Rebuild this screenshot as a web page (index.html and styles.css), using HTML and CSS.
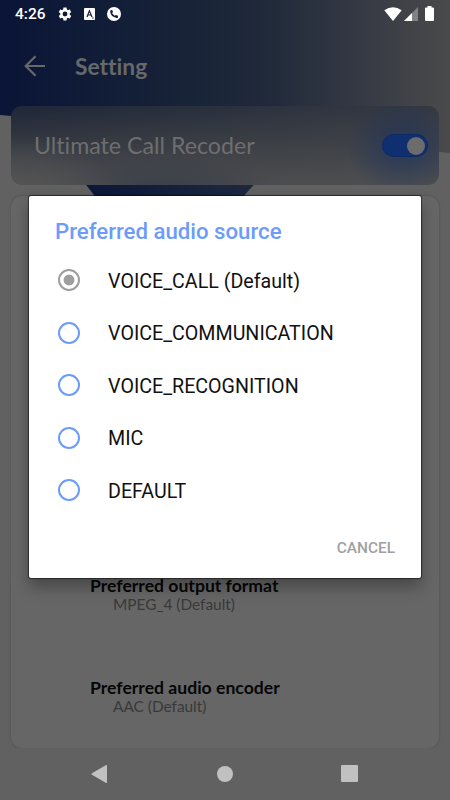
FILE: index.html
```html
<!DOCTYPE html>
<html lang="en">
<head>
    <meta charset="UTF-8">
    <meta name="viewport" content="width=device-width, initial-scale=1.0">
    <title>Setting</title>
    <link rel="stylesheet" href="styles.css">
</head>
<body>
    <div class="phone">
        <!-- Header shape -->
        <svg class="backdrop" width="450" height="200" viewBox="0 0 450 200">
            <defs>
                <linearGradient id="sky" x1="0" y1="0" x2="1" y2="0">
                    <stop offset="0" stop-color="#0a1537"/>
                    <stop offset="0.28" stop-color="#131e37"/>
                    <stop offset="0.6" stop-color="#202a3a"/>
                    <stop offset="0.8" stop-color="#353944"/>
                    <stop offset="1" stop-color="#4a4a4b"/>
                </linearGradient>
                <linearGradient id="tip" x1="0" y1="0" x2="1" y2="0">
                    <stop offset="0" stop-color="#0b1639"/>
                    <stop offset="1" stop-color="#1f2a40"/>
                </linearGradient>
            </defs>
            <path fill="url(#sky)" d="M0 0H450V153L439 152Q330 146 275 165H75Q55 122 11 116L0 115Z"/>
            <path fill="url(#tip)" d="M79 176H262L240 200H98Z"/>
        </svg>

        <div class="screen">
            <div class="status-bar">
                <span class="clock">4:26</span>
                <svg class="gear" width="16" height="16" viewBox="0 0 24 24"><path fill="#fff" d="M19.14 12.94c.04-.3.06-.61.06-.94s-.02-.64-.07-.94l2.03-1.58c.18-.14.23-.41.12-.61l-1.92-3.32c-.12-.22-.37-.29-.59-.22l-2.39.96c-.5-.38-1.03-.7-1.62-.94l-.36-2.54c-.04-.24-.24-.41-.48-.41h-3.84c-.24 0-.43.17-.47.41l-.36 2.54c-.59.24-1.13.57-1.62.94l-2.39-.96c-.22-.08-.47 0-.59.22L2.74 8.87c-.12.21-.08.47.12.61l2.03 1.58c-.05.3-.09.63-.09.94s.02.64.07.94l-2.03 1.58c-.18.14-.23.41-.12.61l1.92 3.32c.12.22.37.29.59.22l2.39-.96c.5.38 1.03.7 1.62.94l.36 2.54c.05.24.24.41.48.41h3.84c.24 0 .44-.17.47-.41l.36-2.54c.59-.24 1.13-.56 1.62-.94l2.39.96c.22.08.47 0 .59-.22l1.92-3.32c.12-.22.07-.47-.12-.61zM12 15.6a3.6 3.6 0 1 1 0-7.2 3.6 3.6 0 0 1 0 7.2z"/></svg>
                <svg class="keyboard" width="11" height="12" viewBox="0 0 11 12"><rect width="11" height="12" rx="1" fill="#fff"/><path d="M3 9L5.4 2.8 8 9M4 7H7" fill="none" stroke="#17213a" stroke-width="1.2"/><path d="M8 10h2" stroke="#17213a" stroke-width=".8"/></svg>
                <svg class="call" width="14" height="14" viewBox="0 0 14 14"><circle cx="7" cy="7" r="7" fill="#fff"/><path fill="#17213a" d="M3.7 3.2L5.2 3 6 5.1 5.1 6.1Q6 7.9 7.9 8.8L8.9 7.9 11 8.7V10.4Q10.4 11 9.6 10.9Q3.5 10 3.1 4.1Z"/></svg>
                <span class="status-icons">
                    <svg width="18" height="14" viewBox="0 0 18 14"><path fill="#fff" d="M.3 3.3Q9-2.9 17.7 3.3L9 14Z"/></svg>
                    <svg width="14" height="14" viewBox="0 0 14 14"><path fill="#808286" d="M14 0V14H0Z"/><path fill="#fff" d="M8 6V14H0Z"/></svg>
                    <svg class="battery" width="9" height="15" viewBox="0 0 9 15"><path fill="#fff" d="M2.5 0h4v1.5H8q1 0 1 1V14q0 1-1 1H1q-1 0-1-1V2.500q0-1 1-1h1.500Z"/></svg>
                </span>
            </div>

            <div class="toolbar">
                <svg width="22" height="22" viewBox="0 0 22 22"><path d="M21 11H2M11.500 1.200L1.700 11l9.800 9.800" fill="none" stroke="#676869" stroke-width="2.200"/></svg>
                <h1>Setting</h1>
            </div>

            <div class="banner">
                <span>Ultimate Call Recoder</span>
                <div class="switch"><div class="knob"></div></div>
            </div>

            <div class="card">
                <div class="item">
                    <h2>Preferred output format</h2>
                    <p>MPEG_4 (Default)</p>
                </div>
                <div class="item">
                    <h2>Preferred audio encoder</h2>
                    <p>AAC (Default)</p>
                </div>
            </div>

            <div class="nav-bar">
                <svg width="18" height="20" viewBox="0 0 18 20"><path fill="#c1c1c1" d="M14.700 1.200Q16 .6 16 2V18Q16 19.400 14.700 18.800L1 10.800Q-.2 10 1 9.200Z"/></svg>
                <svg width="16" height="16" viewBox="0 0 16 16"><circle cx="8" cy="8" r="8" fill="#c1c1c1"/></svg>
                <svg width="17" height="17" viewBox="0 0 17 17"><rect width="17" height="17" rx="1" fill="#c1c1c1"/></svg>
            </div>
        </div>

        <!-- Audio source dialog -->
        <div class="dialog">
            <h3>Preferred audio source</h3>
            <ul class="options">
                <li class="selected"><span class="radio"></span><span class="label">VOICE_CALL (Default)</span></li>
                <li><span class="radio"></span><span class="label">VOICE_COMMUNICATION</span></li>
                <li><span class="radio"></span><span class="label">VOICE_RECOGNITION</span></li>
                <li><span class="radio"></span><span class="label">MIC</span></li>
                <li><span class="radio"></span><span class="label">DEFAULT</span></li>
            </ul>
            <button class="cancel">CANCEL</button>
        </div>
    </div>
</body>
</html>
```
FILE: styles.css
```css
* {
    box-sizing: border-box;
    margin: 0;
    padding: 0;
}

body {
    font-family: Lato, sans-serif;
    font-variant-ligatures: none;
    background-color: #616161;
}

svg {
    display: block;
    flex: none;
}

.phone {
    position: relative;
    width: 450px;
    height: 800px;
    overflow: hidden;
}

.backdrop {
    position: absolute;
    top: 0;
    left: 0;
}

.screen {
    position: relative;
    height: 800px;
    display: flex;
    flex-direction: column;
}

.status-bar {
    height: 27px;
    padding: 0 16px 0 15px;
    display: flex;
    align-items: center;
    color: white;
    font-family: Roboto, sans-serif;
    font-weight: 500;
    font-size: 15.5px;
}

.clock {
    width: 42px;
    line-height: 28px;
}

.keyboard {
    margin-left: 11px;
}

.call {
    margin-left: 12px;
}

.status-icons {
    margin-left: auto;
    display: flex;
    align-items: center;
    gap: 2px;
}

.battery {
    margin-left: 5px;
}

.toolbar {
    height: 79px;
    padding: 0 0 1px 24px;
    display: flex;
    align-items: center;
    gap: 29px;
}

h1 {
    font-size: 22.8px;
    line-height: 30px;
    color: #676869;
}

.banner {
    height: 79px;
    margin: 0 11px;
    padding: 0 11px 0 23px;
    border-radius: 11px;
    display: flex;
    align-items: center;
    justify-content: space-between;
    color: #6e6e6e;
    font-size: 23.2px;
    background: radial-gradient(ellipse 56px 48px at 392px 42px, rgba(24, 48, 98, 0.65), rgba(24, 48, 98, 0)),
        radial-gradient(ellipse 110px 60px at 0 90px, #555, rgba(85, 85, 85, 0)),
        radial-gradient(ellipse 120px 40px at 155px 90px, rgba(50, 56, 70, 0.8), rgba(50, 56, 70, 0)),
        linear-gradient(to right, rgba(70, 75, 84, 0), rgba(80, 80, 80, 0.45)),
        linear-gradient(#1e2638, #31363f 40%, #4c4d50);
}

.banner span {
    padding-bottom: 1px;
}

.switch {
    width: 46px;
    height: 23px;
    padding: 2px;
    border-radius: 12px;
    border: 1px solid #0c2a66;
    background-color: #102f70;
    display: flex;
    align-items: center;
    justify-content: flex-end;
}

.knob {
    width: 18px;
    height: 18px;
    border-radius: 50%;
    background-color: #6c6c6c;
}

.card {
    height: 552px;
    margin: 11px 11px 0;
    padding: 0 79px 33px;
    border-radius: 11px;
    background-color: #666;
    box-shadow: 0 0 3px rgba(0, 0, 0, 0.2);
    display: flex;
    flex-direction: column;
    justify-content: flex-end;
    gap: 65px;
}

h2 {
    font-size: 17.6px;
    line-height: 20px;
    color: #060606;
}

.item p {
    padding-left: 23px;
    font-size: 15.4px;
    line-height: 17px;
    color: #393939;
}

.nav-bar {
    height: 52px;
    padding: 0 92px 1px 91px;
    display: flex;
    align-items: center;
    justify-content: space-between;
    background-color: #616161;
}

.dialog {
    position: absolute;
    top: 196px;
    left: 29px;
    width: 392px;
    height: 382px;
    padding: 20px 26px 15px;
    border-radius: 2px;
    background-color: white;
    box-shadow: 0 0 1px 1px rgba(0, 0, 0, 0.5), 0 9px 16px rgba(0, 0, 0, 0.3);
    font-family: Roboto, sans-serif;
    display: flex;
    flex-direction: column;
}

h3 {
    font-size: 22.2px;
    font-weight: 500;
    line-height: 30px;
    color: #6c9bfa;
}

.options {
    list-style: none;
    margin-top: 8px;
}

.options li {
    height: 52.5px;
    padding-left: 3px;
    display: flex;
    align-items: center;
    gap: 28px;
    font-size: 19.65px;
    color: #111;
}

.label {
    padding-top: 2px;
}

.radio {
    width: 22px;
    height: 22px;
    border: 2px solid #6c9bfa;
    border-radius: 50%;
}

.selected .radio {
    border-color: #9e9e9e;
    background: radial-gradient(#9e9e9e 5px, white 5.8px);
}

.cancel {
    margin-top: auto;
    align-self: flex-end;
    height: 30px;
    border: none;
    background: none;
    font-family: Roboto, sans-serif;
    font-weight: 500;
    font-size: 15.4px;
    color: #a0a0a0;
}
```
